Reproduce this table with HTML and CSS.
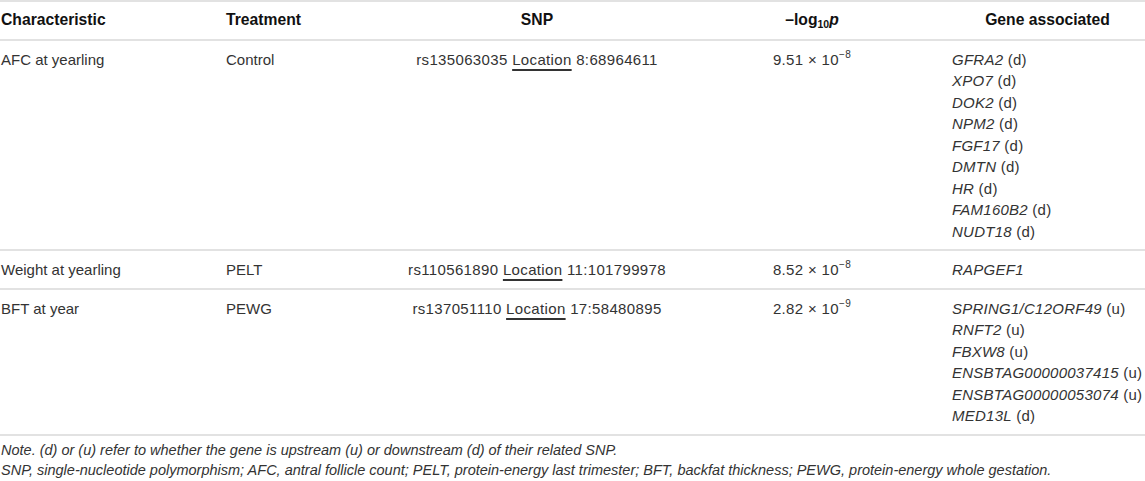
FILE: index.html
```html
<!DOCTYPE html>
<html lang="en">
<head>
<meta charset="utf-8">
<title>Table</title>
<link rel="stylesheet" href="styles.css">
</head>
<body>
<table class="data">
  <colgroup>
    <col class="c1"><col class="c2"><col class="c3"><col class="c4"><col class="c5">
  </colgroup>
  <thead>
    <tr>
      <th class="left first">Characteristic</th>
      <th class="left">Treatment</th>
      <th class="center">SNP</th>
      <th class="center">–log<sub>10</sub><i>p</i></th>
      <th class="center">Gene associated</th>
    </tr>
  </thead>
  <tbody>
    <tr>
      <td class="first">AFC at yearling</td>
      <td>Control</td>
      <td class="center num">rs135063035 <span class="loc">Location</span> 8:68964611</td>
      <td class="center num">9.51 × 10<sup>−8</sup></td>
      <td class="genes"><i>GFRA2</i> (d)<br><i>XPO7</i> (d)<br><i>DOK2</i> (d)<br><i>NPM2</i> (d)<br><i>FGF17</i> (d)<br><i>DMTN</i> (d)<br><i>HR</i> (d)<br><i>FAM160B2</i> (d)<br><i>NUDT18</i> (d)</td>
    </tr>
    <tr>
      <td class="first">Weight at yearling</td>
      <td>PELT</td>
      <td class="center num">rs110561890 <span class="loc">Location</span> 11:101799978</td>
      <td class="center num">8.52 × 10<sup>−8</sup></td>
      <td class="genes"><i>RAPGEF1</i></td>
    </tr>
    <tr>
      <td class="first">BFT at year</td>
      <td>PEWG</td>
      <td class="center num">rs137051110 <span class="loc">Location</span> 17:58480895</td>
      <td class="center num">2.82 × 10<sup>−9</sup></td>
      <td class="genes"><i>SPRING1/C12ORF49</i> (u)<br><i>RNFT2</i> (u)<br><i>FBXW8</i> (u)<br><i>ENSBTAG00000037415</i> (u)<br><i>ENSBTAG00000053074</i> (u)<br><i>MED13L</i> (d)</td>
    </tr>
  </tbody>
</table>
<div class="notes">
  <p>Note. (d) or (u) refer to whether the gene is upstream (u) or downstream (d) of their related SNP.</p>
  <p>SNP, single-nucleotide polymorphism; AFC, antral follicle count; PELT, protein-energy last trimester; BFT, backfat thickness; PEWG, protein-energy whole gestation.</p>
</div>
</body>
</html>
```
FILE: styles.css
```css
html, body {
  margin: 0;
  padding: 0;
  background: #ffffff;
}
body {
  font-family: "Liberation Sans", Arial, sans-serif;
  color: #333333;
  width: 1145px;
  overflow: hidden;
}
.data {
  width: 1145px;
  border-collapse: collapse;
  table-layout: fixed;
  font-size: 15px;
  line-height: 21.5px;
}
.c1 { width: 218px; }
.c2 { width: 182px; }
.c3 { width: 274px; }
.c4 { width: 276px; }
.c5 { width: 195px; }
.data thead tr {
  border-top: 2px solid #e2e2e2;
}
.data tr {
  border-bottom: 2px solid #e2e2e2;
}
.data th {
  font-size: 15.7px;
  font-weight: bold;
  color: #111111;
  padding: 7px 0 8px 8px;
  vertical-align: top;
}
.data td {
  padding: 8px 0 7px 8px;
  vertical-align: top;
  white-space: nowrap;
}
.data .first {
  padding-left: 1px;
}
.left { text-align: left; }
.center { text-align: center; }
.data th.center, .data td.center {
  padding-left: 0;
}
.data td.num {
  letter-spacing: 0.35px;
}
.data td.genes {
  padding-left: 2px;
  letter-spacing: 0.25px;
}
sub {
  font-size: 10.5px;
  line-height: 0;
  vertical-align: -3px;
}
sup {
  font-size: 10px;
  line-height: 0;
  vertical-align: 7px;
}
.loc {
  text-decoration: underline;
  text-decoration-thickness: 1.5px;
  text-underline-offset: 4px;
}
.notes {
  padding-top: 4px;
  font-size: 14.5px;
  line-height: 20px;
  font-style: italic;
  color: #333333;
}
.notes p {
  margin: 0;
  padding-left: 1px;
}
```
